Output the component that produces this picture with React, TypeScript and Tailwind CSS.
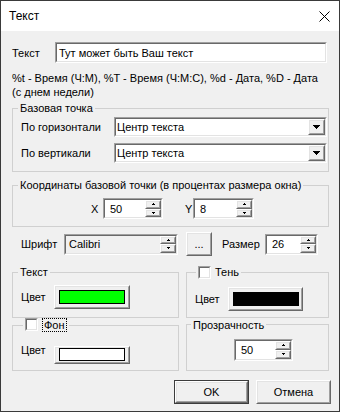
import React from 'react';

type BoxProps = { className?: string; inner?: string; children?: React.ReactNode };

// classic 3d sunken edge (edit, combo, checkbox)
function Sunken({ className = '', inner = 'bg-white', children }: BoxProps) {
  return (
    <div className={`flex border border-t-[#a0a0a0] border-l-[#a0a0a0] border-r-white border-b-white ${className}`}>
      <div className={`flex flex-1 min-w-0 border border-t-[#696969] border-l-[#696969] border-r-[#e3e3e3] border-b-[#e3e3e3] ${inner}`}>
        {children}
      </div>
    </div>
  );
}

// classic 3d raised edge (buttons)
function Raised({ className = '', inner = 'items-center justify-center', children }: BoxProps) {
  return (
    <div className={`flex border border-t-white border-l-white border-r-[#696969] border-b-[#696969] bg-[#f0f0f0] ${className}`}>
      <div className={`flex flex-1 min-w-0 border border-t-[#e3e3e3] border-l-[#e3e3e3] border-r-[#a0a0a0] border-b-[#a0a0a0] ${inner}`}>
        {children}
      </div>
    </div>
  );
}

const UpArrow = () => (
  <svg width="3" height="2" viewBox="0 0 3 2">
    <path d="M1 0h1v1H1z M0 1h3v1H0z" fill="#000" />
  </svg>
);

const DownArrow = () => (
  <svg width="3" height="2" viewBox="0 0 3 2">
    <path d="M0 0h3v1H0z M1 1h1v1H1z" fill="#000" />
  </svg>
);

const ComboArrow = () => (
  <svg width="7" height="4" viewBox="0 0 7 4">
    <path d="M0 0h7v1H0z M1 1h5v1H1z M2 2h3v1H2z M3 3h1v1H3z" fill="#000" />
  </svg>
);

function Spin({ value, className = '', inner = 'bg-white', textPad = 'pl-[5px]' }: { value: string; className?: string; inner?: string; textPad?: string }) {
  return (
    <Sunken className={className} inner={inner}>
      <span className={`self-center ${textPad}`}>{value}</span>
      <div className="ml-auto flex w-[16px] flex-col">
        <Raised className="flex-1">
          <UpArrow />
        </Raised>
        <Raised className="flex-1">
          <DownArrow />
        </Raised>
      </div>
    </Sunken>
  );
}

function Combo() {
  return (
    <Sunken className="h-[20px] w-[213px]" inner="bg-white">
      <span className="self-center pl-[1px]">Центр текста</span>
      <Raised className="ml-auto w-[17px]">
        <ComboArrow />
      </Raised>
    </Sunken>
  );
}

function Check() {
  return <Sunken className="h-[13px] w-[13px]" inner="bg-white" />;
}

function ColorButton({ className = '', swatch, top = false }: { className?: string; swatch: string; top?: boolean }) {
  return (
    <Raised className={className} inner={top ? 'justify-center items-start' : 'items-center justify-center'}>
      <div className={`w-[66px] border border-black ${top ? 'h-[13px]' : 'h-[14px]'} ${swatch}`} />
    </Raised>
  );
}

export default function App() {
  return (
    <div className="flex h-[412px] w-[340px] flex-col overflow-hidden border border-[#3a3a3a] bg-[#f0f0f0] font-['Liberation_Sans',Arial,sans-serif] text-[11px] leading-[14px] text-black">
      <div className="flex h-[30px] shrink-0 items-center bg-white pl-[8px] pr-[9px] text-[12px]">
        <span>Текст</span>
        <svg className="ml-auto" width="11" height="11" viewBox="0 0 11 11">
          <path d="M0.5 0.5L10.5 10.5M10.5 0.5L0.5 10.5" stroke="#000" strokeWidth="1" />
        </svg>
      </div>

      <div className="flex flex-1 flex-col pl-[11px] pt-[11px]">
        <div className="flex h-[21px] items-center">
          <span className="w-[43px]">Текст</span>
          <Sunken className="h-[21px] w-[272px]" inner="bg-white items-center pl-[2px]">
            Тут может быть Ваш текст
          </Sunken>
        </div>

        <div className="mt-[8px] whitespace-nowrap">
          %t - Время (Ч:М), %T - Время (Ч:М:С), %d - Дата, %D - Дата
          <br />
          (с днем недели)
        </div>

        <fieldset className="mt-[2px] w-[317px] border border-[#d0d0d0]">
          <legend className="ml-[5px] px-[2px]">Базовая точка</legend>
          <div className="flex flex-col pb-[8px] pl-[8px] pt-[2px]">
            <div className="flex h-[20px] items-center">
              <span className="w-[93px]">По горизонтали</span>
              <Combo />
            </div>
            <div className="mt-[6px] flex h-[20px] items-center">
              <span className="w-[93px]">По вертикали</span>
              <Combo />
            </div>
          </div>
        </fieldset>

        <fieldset className="mt-[6px] w-[317px] border border-[#d0d0d0]">
          <legend className="ml-[5px] whitespace-nowrap px-[2px]">Координаты базовой точки (в процентах размера окна)</legend>
          <div className="flex items-center pb-[7px] pl-[78px] pt-[6px]">
            <span className="w-[12px]">X</span>
            <Spin className="h-[21px] w-[60px]" value="50" />
            <span className="ml-[22px] w-[8px]">Y</span>
            <Spin className="h-[21px] w-[61px]" value="8" />
          </div>
        </fieldset>

        <div className="mt-[5px] flex h-[24px] items-center pl-[9px]">
          <span className="w-[43px]">Шрифт</span>
          <Spin className="h-[21px] w-[114px]" inner="bg-[#f0f0f0]" textPad="pl-[3px]" value="Calibri" />
          <Raised className="ml-[8px] h-[24px] w-[26px]">...</Raised>
          <span className="ml-[10px] w-[43px]">Размер</span>
          <Spin className="h-[21px] w-[53px]" value="26" />
        </div>

        <div className="mt-[9px] flex gap-[7px]">
          <fieldset className="w-[167px] border border-[#d0d0d0]">
            <legend className="ml-[5px] px-[2px]">Текст</legend>
            <div className="flex items-center pb-[6px] pl-[8px] pt-[6px]">
              <span className="w-[33px]">Цвет</span>
              <ColorButton className="h-[24px] w-[76px]" swatch="bg-[#00ff00]" />
            </div>
          </fieldset>
          <fieldset className="w-[143px] border border-[#d0d0d0]">
            <legend className="ml-[9px] px-[2px]">
              <span className="inline-flex items-center gap-[4px]">
                <Check />
                Тень
              </span>
            </legend>
            <div className="flex items-center pb-[6px] pl-[8px] pt-[6px]">
              <span className="w-[33px]">Цвет</span>
              <ColorButton className="h-[24px] w-[75px]" swatch="bg-black" />
            </div>
          </fieldset>
        </div>

        <div className="flex gap-[7px]">
          <fieldset className="w-[167px] border border-[#d0d0d0]">
            <legend className="ml-[10px] px-[2px]">
              <span className="inline-flex items-center gap-[4px]">
                <Check />
                <span className="border border-dotted border-black px-[1px] leading-[12px]">Фон</span>
              </span>
            </legend>
            <div className="flex items-start pb-[6px] pl-[8px] pt-[13px]">
              <span className="-mt-[3px] w-[33px]">Цвет</span>
              <ColorButton className="h-[18px] w-[76px]" swatch="bg-white" top />
            </div>
          </fieldset>
          <fieldset className="w-[143px] border border-[#d0d0d0]">
            <legend className="ml-[4px] px-[2px]">Прозрачность</legend>
            <div className="pb-[8px] pl-[47px] pt-[7px]">
              <Spin className="h-[22px] w-[59px]" value="50" />
            </div>
          </fieldset>
        </div>

        <div className="mt-[9px] flex gap-[7px] pl-[162px]">
          <div className="flex h-[24px] w-[75px] border border-[#3c3c3c]">
            <Raised className="flex-1">OK</Raised>
          </div>
          <Raised className="h-[24px] w-[75px]">Отмена</Raised>
        </div>
      </div>
    </div>
  );
}
